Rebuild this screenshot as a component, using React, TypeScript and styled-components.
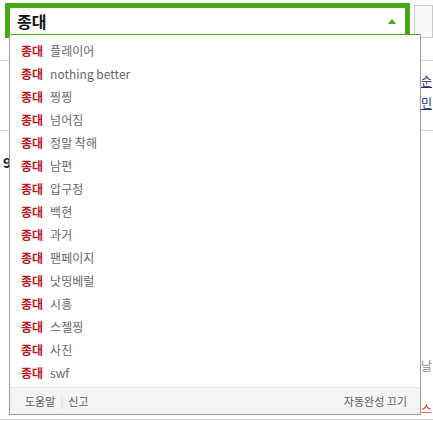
import React from "react";
import styled, { createGlobalStyle } from "styled-components";

const GREEN = "#48a81c";

const GlobalStyle = createGlobalStyle`
  html, body { margin: 0; padding: 0; background: #fff; }
  body { font-family: "Noto Sans CJK KR", "Noto Sans", sans-serif; }
  * { box-sizing: border-box; }
`;

const Page = styled.div`
  position: relative;
  width: 433px;
  height: 421px;
  overflow: hidden;
  background: #fff;
`;

const Header = styled.div`
  display: flex;
  align-items: flex-start;
  padding: 3px 0 0 5px;
  height: 38px;
`;

const SearchFrame = styled.div`
  width: 421px;
  height: 35px;
  border: 5px solid ${GREEN};
  border-bottom-width: 4px;
  background: #fff;
  display: flex;
  align-items: center;
  justify-content: space-between;
  padding: 0 9px 0 7px;
`;

const QueryText = styled.span`
  font-size: 16px;
  font-weight: 700;
  color: #111;
  line-height: 20px;
`;

const SearchButton = styled.div`
  width: 20px;
  height: 33px;
  margin: 2px 0 0 4px;
  border: 1px solid #c9c9c9;
  background: #fafafa;
`;

const Section = styled.div<{ $h: number; $line?: boolean }>`
  display: grid;
  grid-template-columns: 421px 1fr;
  height: ${(p) => p.$h}px;
  border-bottom: ${(p) => (p.$line ? "1px solid #dcdcdc" : "none")};
`;

const MainCell = styled.div<{ $pt?: number }>`
  padding: ${(p) => p.$pt ?? 0}px 0 0 3px;
  font-size: 14px;
  font-weight: 700;
  line-height: 16px;
  color: #222;
`;

const SideCell = styled.div<{ $pt?: number }>`
  display: flex;
  flex-direction: column;
  padding: ${(p) => p.$pt ?? 0}px 0 0 0;
  white-space: nowrap;
  overflow: hidden;
`;

const SideLink = styled.a<{ $color?: string; $mt?: number }>`
  font-size: 12px;
  line-height: 22px;
  margin-top: ${(p) => p.$mt ?? 0}px;
  color: ${(p) => p.$color ?? "#1d2a8c"};
  text-decoration: ${(p) => (p.$color ? "none" : "underline")};
`;

const Dropdown = styled.div`
  position: absolute;
  left: 9px;
  top: 34px;
  width: 412px;
  height: 381px;
  background: #fff;
  border: 1px solid #9a9a9a;
  border-top: 1px solid ${GREEN};
  display: flex;
  flex-direction: column;
`;

const List = styled.ul`
  list-style: none;
  margin: 0;
  padding: 4px 0 3px 0;
  flex: 1;
`;

const Item = styled.li`
  height: 23px;
  display: flex;
  align-items: center;
  padding-left: 11px;
  font-size: 12px;
  color: #666;
  white-space: nowrap;
`;

const Keyword = styled.strong`
  color: #c0131b;
  font-weight: 700;
  margin-right: 7px;
`;

const Footer = styled.div`
  height: 27px;
  border-top: 1px solid #e3e3e3;
  background: #f5f5f5;
  display: flex;
  align-items: center;
  justify-content: space-between;
  padding: 0 13px 0 15px;
  font-size: 11px;
  color: #5a5a5a;
`;

const FooterLinks = styled.div`
  display: flex;
  align-items: center;
  gap: 5px;
`;

const Sep = styled.span`
  color: #d0d0d0;
`;

const suggestions = [
  "플레이어",
  "nothing better",
  "찡찡",
  "넘어짐",
  "정말 착해",
  "남편",
  "압구정",
  "백현",
  "과거",
  "팬페이지",
  "낫띵베럴",
  "시흥",
  "스젤찡",
  "사진",
  "swf",
];

export default function App() {
  return (
    <Page>
      <GlobalStyle />
      <Header>
        <SearchFrame>
          <QueryText>종대</QueryText>
          <svg width="8" height="5" viewBox="0 0 8 5">
            <path d="M0 5 L4 0 L8 5 Z" fill={GREEN} />
          </svg>
        </SearchFrame>
        <SearchButton />
      </Header>
      <Section $h={23} $line>
        <MainCell />
        <SideCell />
      </Section>
      <Section $h={70} $line>
        <MainCell />
        <SideCell $pt={9}>
          <SideLink>순</SideLink>
          <SideLink>민</SideLink>
        </SideCell>
      </Section>
      <Section $h={289} $line>
        <MainCell $pt={23}>9</MainCell>
        <SideCell $pt={224}>
          <SideLink $color="#888">날</SideLink>
          <SideLink $color="#e0343a" $mt={21}>스</SideLink>
        </SideCell>
      </Section>
      <Dropdown>
        <List>
          {suggestions.map((s) => (
            <Item key={s}>
              <Keyword>종대</Keyword>
              {s}
            </Item>
          ))}
        </List>
        <Footer>
          <FooterLinks>
            <span>도움말</span>
            <Sep>|</Sep>
            <span>신고</span>
          </FooterLinks>
          <span>자동완성 끄기</span>
        </Footer>
      </Dropdown>
    </Page>
  );
}
